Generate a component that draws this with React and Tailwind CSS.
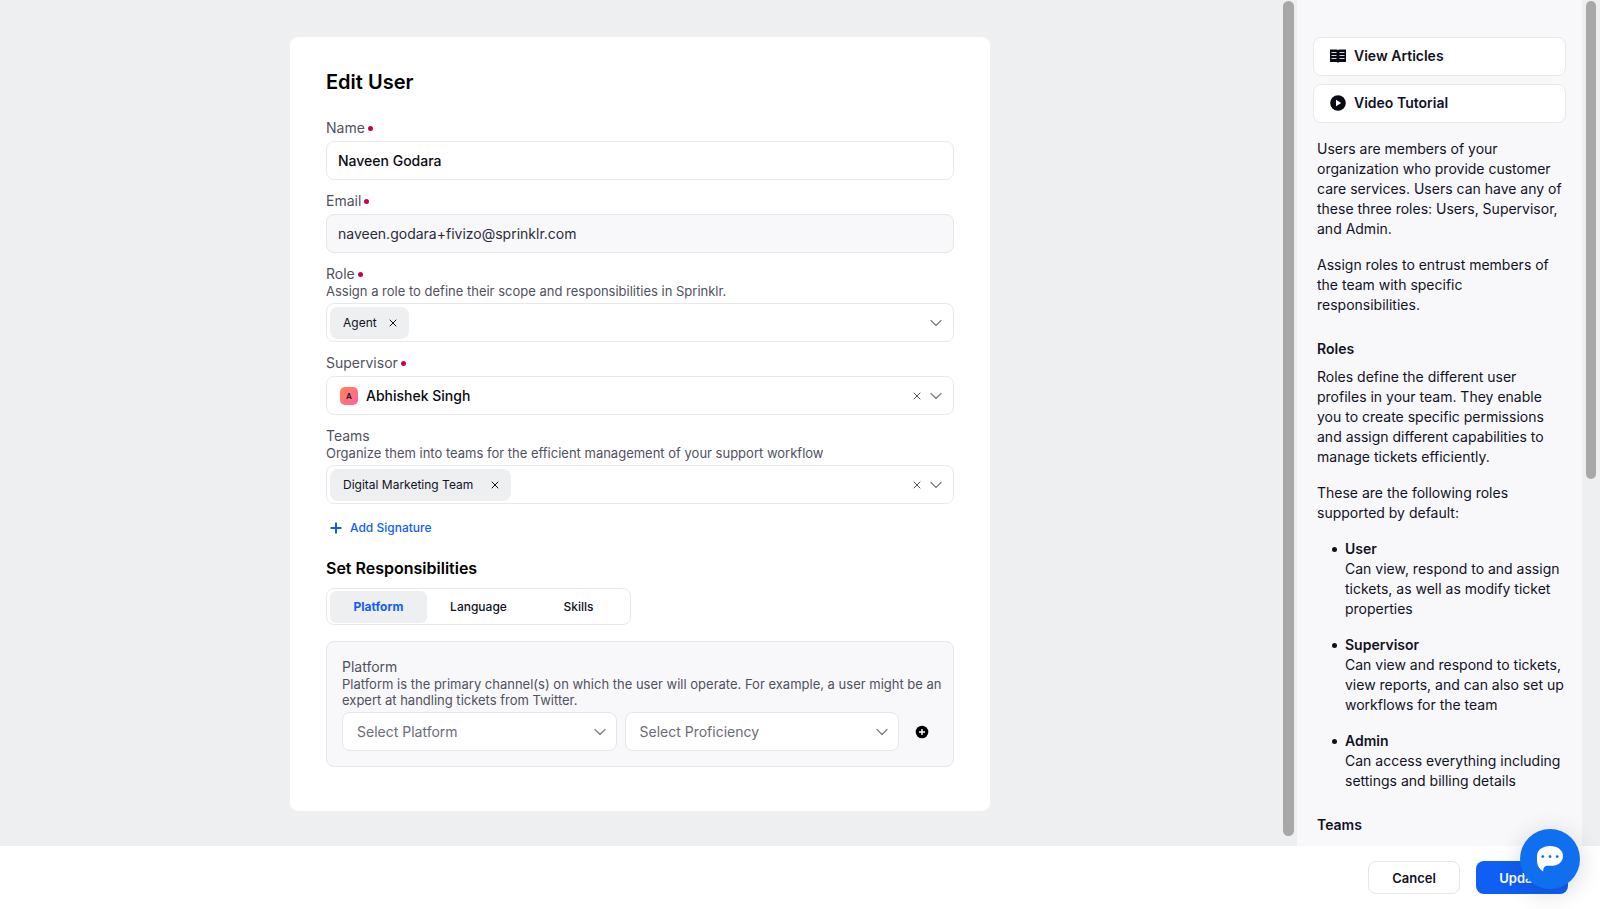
import { useState } from 'react'
import { Plus, X } from 'lucide-react'

const TABS = ['Platform', 'Language', 'Skills']

const ROLES = [
  { name: 'User', text: 'Can view, respond to and assign tickets, as well as modify ticket properties' },
  { name: 'Supervisor', text: 'Can view and respond to tickets, view reports, and can also set up workflows for the team' },
  { name: 'Admin', text: 'Can access everything including settings and billing details' },
]

function Label({ htmlFor, required, children }) {
  return (
    <label htmlFor={htmlFor} className="flex items-center gap-[3px] pb-px text-sm leading-4 text-[#51515e]">
      {children}
      {required && <span className="size-[5px] rounded-full bg-[#cc0052]" />}
    </label>
  )
}

function Hint({ children }) {
  return <p className="text-[13px] leading-4 text-[#51515e]">{children}</p>
}

function Chevron() {
  return (
    <svg viewBox="0 0 16 16" className="size-4 shrink-0" fill="none">
      <path d="M3 5.500l5 5l5-5" stroke="#7c7c8a" strokeWidth="1.200" strokeLinecap="round" strokeLinejoin="round" />
    </svg>
  )
}

function Chip({ children, wide, onRemove }) {
  return (
    <span className={`flex h-8 items-center rounded-lg bg-[#edeff1] pr-2 pl-[13px] text-xs text-[#12121f] ${wide ? 'gap-[14px]' : 'gap-2'}`}>
      {children}
      <button type="button" aria-label={`Remove ${children}`} onClick={onRemove} className="flex size-4 items-center justify-center">
        <X className="size-3" strokeWidth={2} />
      </button>
    </span>
  )
}

function Combo({ id, clearable, onClear, children, ...props }) {
  return (
    <div className="mt-1 flex h-[39px] items-center rounded-lg border border-[#e9e9ec] bg-white pr-[9px] pl-[3px]">
      {children}
      <input id={id} className="h-full min-w-0 flex-1 bg-transparent px-2 text-sm font-medium text-[#0a0a14] outline-none" {...props} />
      {clearable && (
        <button type="button" aria-label="Clear" onClick={onClear} className="mr-[5px] flex size-3 items-center justify-center text-[#51515e]">
          <X className="size-3" strokeWidth={2} />
        </button>
      )}
      <Chevron />
    </div>
  )
}

function Select({ label }) {
  return (
    <div className="relative flex h-[39px] flex-1 items-center rounded-lg border border-[#e6e6ea] bg-white">
      <select aria-label={label} className="h-full w-full appearance-none bg-transparent pr-8 pl-3.5 text-sm text-[#6c6c7a] outline-none">
        <option>{label}</option>
      </select>
      <span className="pointer-events-none absolute right-2">
        <Chevron />
      </span>
    </div>
  )
}

function BookIcon() {
  return (
    <svg viewBox="0 0 16 16" className="size-4" fill="none">
      <path d="M0 1.500h6.600q1 0 1.400.5q.4-.5 1.400-.5H16v12.600H9.200L8 14.800l-1.200-.7H0z" fill="#0a0a14" />
      <path d="M1.500 4.500h5M1.500 7.500h5M1.500 10.500h5M9.500 4.500h5M9.500 7.500h5M9.500 10.500h5" stroke="#d4d4d8" />
    </svg>
  )
}

function PlayIcon() {
  return (
    <svg viewBox="0 0 16 16" className="size-4">
      <circle cx="8" cy="8" r="7.800" fill="#0a0a14" />
      <path d="M6 4.800v6.400L11.200 8z" fill="#fff" />
    </svg>
  )
}

function EditForm() {
  const [name, setName] = useState('Naveen Godara')
  const [supervisor, setSupervisor] = useState('Abhishek Singh')
  const [roles, setRoles] = useState(['Agent'])
  const [teams, setTeams] = useState(['Digital Marketing Team'])
  const [tab, setTab] = useState('Platform')

  return (
    <form className="w-full max-w-[700px] rounded-lg bg-white px-9 pt-[33px] pb-11">
      <h1 className="text-xl leading-6 font-semibold text-black">Edit User</h1>

      <div className="mt-[26px] space-y-[13px]">
        <div>
          <Label htmlFor="name" required>Name</Label>
          <input
            id="name"
            value={name}
            onChange={(e) => setName(e.target.value)}
            className="mt-1 block h-[39px] w-full rounded-lg border border-[#e9e9ec] px-[11px] text-sm font-medium text-[#0a0a14] outline-none"
          />
        </div>

        <div>
          <Label htmlFor="email" required>Email</Label>
          <input
            id="email"
            type="email"
            readOnly
            value="naveen.godara+fivizo@sprinklr.com"
            className="mt-1 block h-[39px] w-full rounded-lg border border-[#e6e6ea] bg-[#f8f8fa] px-[11px] text-sm text-[#2c2c3c] outline-none"
          />
        </div>

        <div>
          <Label htmlFor="role" required>Role</Label>
          <Hint>Assign a role to define their scope and responsibilities in Sprinklr.</Hint>
          <Combo id="role">
            {roles.map((role) => (
              <Chip key={role} onRemove={() => setRoles([])}>{role}</Chip>
            ))}
          </Combo>
        </div>

        <div>
          <Label htmlFor="supervisor" required>Supervisor</Label>
          <Combo
            id="supervisor"
            clearable
            onClear={() => setSupervisor('')}
            value={supervisor}
            onChange={(e) => setSupervisor(e.target.value)}
          >
            <span className="ml-2.5 flex size-[18px] items-center justify-center rounded-[5px] bg-linear-to-br from-[#ff8350] to-[#ff5f9e] text-[8px] leading-[18px] font-semibold text-[#12121f]">
              A
            </span>
          </Combo>
        </div>

        <div>
          <Label htmlFor="teams">Teams</Label>
          <Hint>Organize them into teams for the efficient management of your support workflow</Hint>
          <Combo id="teams" clearable onClear={() => setTeams([])}>
            {teams.map((team) => (
              <Chip key={team} wide onRemove={() => setTeams([])}>{team}</Chip>
            ))}
          </Combo>
        </div>
      </div>

      <button type="button" className="mt-4 flex items-center gap-1.5 pl-0.5 text-xs font-medium text-[#0f5ff5]">
        <Plus className="size-4" strokeWidth={3} />
        Add Signature
      </button>

      <h2 className="mt-5 text-base leading-6 font-semibold text-black">Set Responsibilities</h2>

      <div role="tablist" className="mt-2 inline-flex h-[37px] items-center gap-[3px] rounded-lg border border-[#e9e9ec] px-[3px]">
        {TABS.map((item) => (
          <button
            key={item}
            type="button"
            role="tab"
            aria-selected={item === tab}
            onClick={() => setTab(item)}
            className={`h-8 w-[97px] rounded-md text-xs ${
              item === tab ? 'bg-[#edeff1] font-bold text-[#0f5ff5]' : 'font-medium text-[#12121f]'
            }`}
          >
            {item}
          </button>
        ))}
      </div>

      <section className="mt-4 rounded-lg border border-[#e6e6ea] bg-[#f8f8fa] pt-[17px] pr-2 pb-[15px] pl-[15px]">
        <h3 className="pb-px text-sm leading-4 text-[#51515e]">Platform</h3>
        <Hint>
          Platform is the primary channel(s) on which the user will operate. For example, a user might be an expert at
          handling tickets from Twitter.
        </Hint>
        <div className="mt-1 flex items-center gap-2">
          <Select label="Select Platform" />
          <Select label="Select Proficiency" />
          <button type="button" aria-label="Add platform" className="mr-4 ml-2 flex size-3.5 items-center justify-center">
            <svg viewBox="0 0 14 14" className="size-3.5">
              <circle cx="7" cy="7" r="6.300" fill="#000" />
              <path d="M7 4v6M4 7h6" stroke="#fff" strokeWidth="1.400" />
            </svg>
          </button>
        </div>
      </section>
    </form>
  )
}

function HelpPanel() {
  return (
    <aside className="w-[285px] shrink-0 overflow-hidden bg-[#f8f8fb] px-4 pt-[37px] text-sm leading-5 text-[#12121f]">
      <div className="flex flex-col gap-2">
        <button type="button" className="flex h-[39px] items-center gap-2 rounded-lg border border-[#e9e9ec] bg-white px-4 pb-0.5 font-semibold">
          <BookIcon />
          View Articles
        </button>
        <button type="button" className="flex h-[39px] items-center gap-2 rounded-lg border border-[#e9e9ec] bg-white px-4 pb-0.5 font-semibold">
          <PlayIcon />
          Video Tutorial
        </button>
      </div>

      <div className="mt-4 space-y-4 pl-1">
        <p>
          Users are members of your organization who provide customer care services. Users can have any of these three
          roles: Users, Supervisor, and Admin.
        </p>
        <p>Assign roles to entrust members of the team with specific responsibilities.</p>
        <div className="pt-2">
          <h3 className="mb-2 font-semibold">Roles</h3>
          <p>
            Roles define the different user profiles in your team. They enable you to create specific permissions and
            assign different capabilities to manage tickets efficiently.
          </p>
        </div>
        <p>These are the following roles supported by default:</p>
        <ul className="-mr-2 space-y-4 pl-[15px]">
          {ROLES.map((role) => (
            <li key={role.name} className="flex gap-2">
              <span className="mt-2 size-[5px] shrink-0 rounded-full bg-[#12121f]" />
              <div>
                <strong className="font-semibold">{role.name}</strong>
                <p>{role.text}</p>
              </div>
            </li>
          ))}
        </ul>
        <h3 className="pt-2 font-semibold">Teams</h3>
      </div>
    </aside>
  )
}

export default function App() {
  return (
    <div className="flex h-screen flex-col bg-white font-[Inter,sans-serif]">
      <div className="flex min-h-0 flex-1 bg-[#edeff1]">
        <main className="flex min-w-0 flex-1 items-start justify-center overflow-hidden pt-[37px]">
          <EditForm />
        </main>
        <div className="w-[17px] shrink-0 px-[3px] pt-px pb-2.5">
          <div className="h-full rounded-full bg-[#a8a8a8]" />
        </div>
        <HelpPanel />
        <div className="w-[18px] shrink-0 px-1 pt-px">
          <div className="h-[478px] rounded-full bg-[#a8a8a8]" />
        </div>
      </div>

      <footer className="flex h-[63px] shrink-0 items-center justify-end gap-4 pr-8 text-[13px] font-semibold">
        <button type="button" className="h-[33px] w-[92px] rounded-lg border border-[#e6e6ea] bg-white pt-0.5 text-[#12121f]">
          Cancel
        </button>
        <button type="button" className="h-[33px] w-[92px] rounded-lg bg-[#0f5ff5] pt-0.5 text-white">
          Update
        </button>
      </footer>

      <button
        type="button"
        aria-label="Open chat"
        className="fixed right-5 bottom-5 flex size-[60px] items-center justify-center rounded-full bg-[#0f6fee] shadow-[0_4px_24px_rgba(0,0,0,0.16)]"
      >
        <svg viewBox="0 0 28 28" className="size-7">
          <path d="M14 1C6.500 1 1 5.200 1 11v5c0 4.600 2.200 8 6.200 10.600c0-3.800 1.200-5.800 5-5.800H15c7.200 0 12-4 12-9.900S21.500 1 14 1z" fill="#fff" />
          <g fill="#0f6fee">
            <circle cx="6.800" cy="11.600" r="1.400" />
            <circle cx="14" cy="11.600" r="1.400" />
            <circle cx="21.200" cy="11.600" r="1.400" />
          </g>
        </svg>
      </button>
    </div>
  )
}
